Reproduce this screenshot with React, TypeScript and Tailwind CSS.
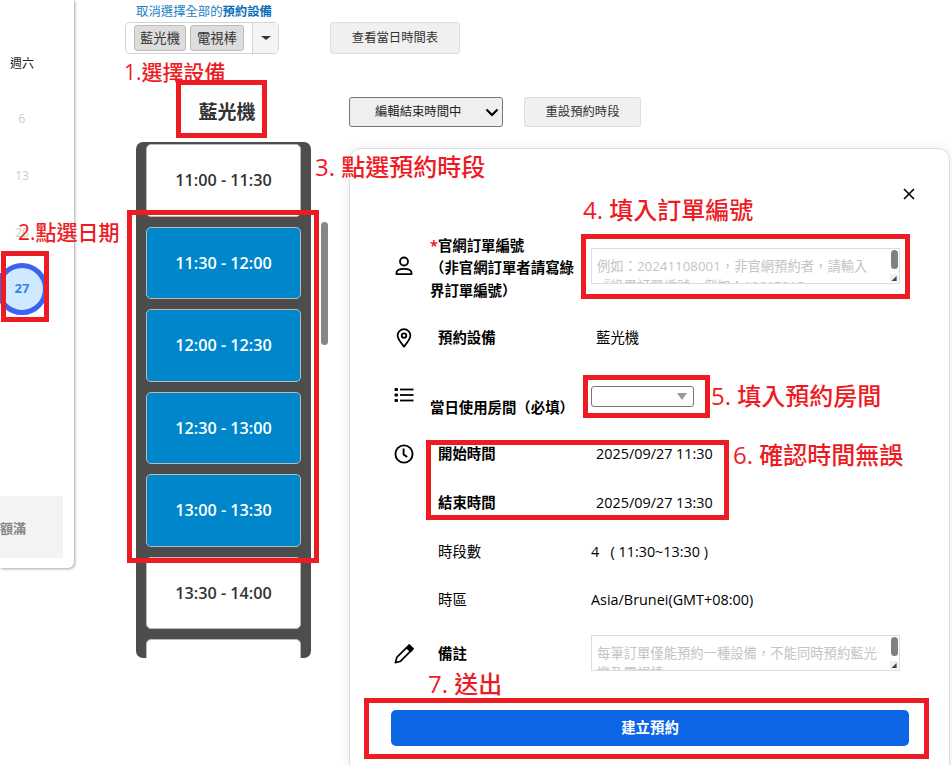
const FONT = "font-['Open_Sans','Noto_Sans_CJK_TC',sans-serif]"

const SLOTS = [
  { label: '11:00 - 11:30', picked: false },
  { label: '11:30 - 12:00', picked: true },
  { label: '12:00 - 12:30', picked: true },
  { label: '12:30 - 13:00', picked: true },
  { label: '13:00 - 13:30', picked: true },
  { label: '13:30 - 14:00', picked: false },
  { label: '14:00 - 14:30', picked: false },
]

function PersonIcon() {
  return (
    <svg width="18" height="20" viewBox="0 0 18 20" fill="none" stroke="black" strokeWidth="1.8">
      <circle cx="9" cy="5.5" r="4" />
      <path d="M1.5 18.2v-1.4c0-2.4 2.4-4 7.5-4s7.5 1.6 7.5 4v1.4z" strokeLinejoin="round" />
    </svg>
  )
}

function PinIcon() {
  return (
    <svg width="16" height="20" viewBox="0 0 16 20" fill="none" stroke="black" strokeWidth="1.8">
      <path d="M8 18.6C4.6 14.6 1.6 11 1.6 7.6a6.4 6.4 0 0 1 12.8 0c0 3.4-3 7-6.4 11z" strokeLinejoin="round" />
      <circle cx="8" cy="7.6" r="2.3" />
    </svg>
  )
}

function ListIcon() {
  return (
    <svg width="20" height="16" viewBox="0 0 20 16" fill="black">
      <rect x="0.5" y="1" width="3.5" height="3" rx="1" />
      <rect x="0.5" y="6.5" width="3.5" height="3" rx="1" />
      <rect x="0.5" y="12" width="3.5" height="3" rx="1" />
      <rect x="6" y="1.6" width="13.5" height="1.8" />
      <rect x="6" y="7.1" width="13.5" height="1.8" />
      <rect x="6" y="12.6" width="13.5" height="1.8" />
    </svg>
  )
}

function ClockIcon() {
  return (
    <svg width="20" height="20" viewBox="0 0 20 20" fill="none" stroke="black" strokeWidth="1.9">
      <circle cx="10" cy="10" r="8.6" />
      <path d="M9.6 4.4v6l3.6 2.6" />
    </svg>
  )
}

function PencilIcon() {
  return (
    <svg width="20" height="20" viewBox="0 0 20 20" fill="none" stroke="black" strokeWidth="1.7">
      <path d="M1.4 18.6l1.4-5.2L12.6 3.6l3.8 3.8-9.8 9.8z" strokeLinejoin="round" />
      <path d="M13.2 3l2-2 3.8 3.8-2 2.2z" fill="black" />
    </svg>
  )
}

function FakeTextarea({ text, className }: { text: string; className: string }) {
  return (
    <div className={`relative h-[36px] w-[309px] shrink-0 overflow-hidden border border-[#ddd] bg-white ${className}`}>
      <p className="w-[288px] pl-[5px] pt-[7px] text-[13.33px] leading-[20px] text-[#c4c4c4]">{text}</p>
      <span className="absolute right-[1px] top-[1px] h-[19px] w-[7px] rounded-full bg-[#808080]" />
      <span className="absolute bottom-[1px] right-[1px] flex h-[8px] w-[8px] items-center justify-center bg-[#efefef] text-[5px] leading-none text-[#444]">
        ◢
      </span>
    </div>
  )
}

const ANNOTATIONS = [
  { text: '1.選擇設備', className: 'left-[124px] top-[57px] text-[21px]' },
  { text: '2.點選日期', className: 'left-[18px] top-[217px] text-[21px]' },
  { text: '3. 點選預約時段', className: 'left-[315px] top-[152px] text-[24px]' },
  { text: '4. 填入訂單編號', className: 'left-[583px] top-[195px] text-[24px]' },
  { text: '5. 填入預約房間', className: 'left-[711px] top-[381px] text-[24px]' },
  { text: '6. 確認時間無誤', className: 'left-[733px] top-[440px] text-[24px]' },
  { text: '7. 送出', className: 'left-[428px] top-[669px] text-[24px]' },
]

const BOXES = [
  'left-[176px] top-[80px] h-[58px] w-[91px]',
  'left-[1px] top-[251px] h-[71px] w-[48px]',
  'left-[127px] top-[210px] h-[353px] w-[192px]',
  'left-[581px] top-[234px] h-[65px] w-[329px]',
  'left-[583px] top-[375px] h-[43px] w-[127px]',
  'left-[426px] top-[440px] h-[80px] w-[303px]',
  'left-[364px] top-[698px] h-[61px] w-[565px]',
]

function Modal() {
  return (
    <div className="absolute left-[349px] top-[148px] h-[640px] w-[601px] rounded-[12px] border border-[#ddd] bg-white pl-[41px] text-[14.4px] text-black shadow-[0_0_12px_rgba(0,0,0,0.08)]">
      <div className="flex h-[76px] items-start justify-end pr-[34px] pt-[39px]">
        <svg width="12" height="12" viewBox="0 0 12 12" stroke="black" strokeWidth="1.6">
          <path d="M1 1l10 10M11 1L1 11" />
        </svg>
      </div>

      <div className="flex h-[80px] items-center">
        <div className="flex w-[25px] justify-center pt-[2px]">
          <PersonIcon />
        </div>
        <div className="ml-[14px] w-[146px] pt-[7px] font-semibold leading-[22.5px]">
          <p><span className="text-[#e00]">*</span>官網訂單編號</p>
          <p>（非官網訂單者請寫綠界訂單編號）</p>
        </div>
        <FakeTextarea
          className="ml-[15px] mt-[2px]"
          text="例如：20241108001，非官網預約者，請輸入『綠界訂單編號』例如：10615015"
        />
      </div>

      <div className="flex h-[66px] items-center">
        <div className="flex w-[25px] justify-center">
          <PinIcon />
        </div>
        <span className="ml-[22px] w-[158px] font-semibold">預約設備</span>
        <span>藍光機</span>
      </div>

      <div className="flex h-[70px] items-start pt-[15px]">
        <div className="flex w-[26px] justify-center pt-[1px]">
          <ListIcon />
        </div>
        <span className="ml-[13px] mt-[11px] w-[161px] whitespace-nowrap font-semibold">當日使用房間（必填）</span>
        <div className="relative h-[21px] w-[103px] rounded-[3px] border border-[#767676] bg-white">
          <span className="absolute right-[6px] top-[6px] h-0 w-0 border-x-[5px] border-t-[7px] border-x-transparent border-t-[#999]" />
        </div>
      </div>

      <div className="flex h-[49px] items-start pt-[2px]">
        <div className="flex w-[26px] justify-center pt-[1px]">
          <ClockIcon />
        </div>
        <span className="ml-[21px] w-[158px] font-semibold">開始時間</span>
        <span>2025/09/27 11:30</span>
      </div>

      <div className="flex h-[49px] items-start pt-[2px]">
        <span className="ml-[47px] w-[158px] font-semibold">結束時間</span>
        <span>2025/09/27 13:30</span>
      </div>

      <div className="flex h-[48px] items-start pt-[2px]">
        <span className="ml-[47px] w-[153px]">時段數</span>
        <span className="whitespace-pre">4   ( 11:30~13:30 )</span>
      </div>

      <div className="flex h-[48px] items-start pt-[2px]">
        <span className="ml-[47px] w-[153px]">時區</span>
        <span>Asia/Brunei(GMT+08:00)</span>
      </div>

      <div className="flex h-[75px] items-start">
        <div className="flex w-[26px] justify-center pt-[9px]">
          <PencilIcon />
        </div>
        <span className="ml-[21px] mt-[8px] w-[153px] font-semibold">備註</span>
        <FakeTextarea text="每筆訂單僅能預約一種設備，不能同時預約藍光機及電視棒。" />
      </div>

      <button className="block h-[36px] w-[518px] rounded-[5px] bg-[#0d66e4] font-semibold text-white">
        建立預約
      </button>
    </div>
  )
}

export default function App() {
  return (
    <div className={`relative flex h-[765px] w-[952px] overflow-hidden bg-white ${FONT}`}>
      {/* calendar sliver */}
      <div className="flex h-[568px] w-[74px] shrink-0 flex-col rounded-br-[6px] bg-white pt-[53px] text-[12px] shadow-[1px_1px_3px_rgba(0,0,0,0.35)]">
        <div className="w-[44px] pt-[2px] text-center leading-[18px] text-[#222]">週六</div>
        <div className="mt-[37px] w-[44px] text-center leading-[18px] text-[#ccc]">6</div>
        <div className="mt-[39px] w-[44px] text-center leading-[18px] text-[#ccc]">13</div>
        <div className="mt-[39px] w-[44px] text-center leading-[18px] text-[#ccc]">20</div>
        <div className="ml-[-4px] mt-[21px] flex h-[52px] w-[52px] items-center justify-center rounded-full border-[5px] border-[#3b63f0] bg-[#cfe9ff] text-[13px] font-bold text-[#3b7cf0]">
          27
        </div>
        <div className="mt-[181px] flex h-[62px] w-[63px] items-center justify-end whitespace-nowrap bg-[#f3f3f3] pr-[37px] pt-[3px] text-[13px] font-semibold text-[#888]">
          額滿
        </div>
      </div>
      <span className="absolute left-0 top-[273px] h-[29px] w-[2px] bg-[#3b63f0]" />

      {/* booking column */}
      <div className="relative flex grow flex-col pl-[51px]">
        <div className="ml-[2px] flex h-[22px] w-[154px] items-center justify-center whitespace-nowrap pt-[2px] text-[12.35px] text-[#1a7fc4]">
          取消選擇全部的<span className="font-semibold text-[#0a6fb8]">預約設備</span>
        </div>

        <div className="flex items-start">
          <div className="flex h-[32px] w-[154px] items-center overflow-hidden rounded-[5px] border border-[#d4d4d4]">
            <div className="flex grow items-center gap-[4px] pl-[8px]">
              <span className="rounded-[3px] border border-[#bbb] bg-[#ddd] px-[5px] text-[13.33px] leading-[24px] text-[#333]">藍光機</span>
              <span className="rounded-[3px] border border-[#bbb] bg-[#ddd] px-[6px] text-[13.33px] leading-[24px] text-[#333]">電視棒</span>
            </div>
            <div className="flex h-full w-[26px] items-center justify-center border-l border-[#d4d4d4] bg-[#f4f4f4]">
              <span className="h-0 w-0 border-x-[5px] border-t-[4px] border-x-transparent border-t-[#333]" />
            </div>
          </div>
          <button className="ml-[51px] h-[32px] w-[130px] rounded-[3px] border border-[#ddd] bg-[#f0f0f0] text-[12.35px] text-[#333]">
            查看當日時間表
          </button>
        </div>

        <div className="mt-[43px] flex items-center">
          <div className="w-[204px] text-center text-[19px] font-bold text-[#333]">藍光機</div>
          <div className="ml-[20px] flex h-[30px] w-[154px] items-center rounded-[3px] border border-[#767676] bg-[#efefef] pl-[25px] text-[12.35px] text-[#222]">
            編輯結束時間中
            <svg className="ml-[24px]" width="14" height="9" viewBox="0 0 14 9" fill="none" stroke="black" strokeWidth="2.2">
              <path d="M1.5 1.5l5.5 5.5 5.5-5.5" />
            </svg>
          </div>
          <button className="ml-[21px] h-[30px] w-[117px] rounded-[3px] border border-[#ddd] bg-[#f0f0f0] text-[12.35px] text-[#333]">
            重設預約時段
          </button>
        </div>

        <div className="mt-[15px] flex items-start pl-[11px]">
          <div className="flex h-[516px] w-[175px] flex-col gap-[10px] overflow-hidden rounded-[7px] bg-[#4d4d4d] px-[10px] pt-[2px]">
            {SLOTS.map((slot) => (
              <div
                key={slot.label}
                className={`flex h-[72.5px] shrink-0 items-center justify-center rounded-[5px] border border-[#bbb] text-[16.2px] font-semibold ${
                  slot.picked ? 'bg-[#0087cb] text-white' : 'bg-white text-[#333]'
                }`}
              >
                {slot.label}
              </div>
            ))}
          </div>
          <div className="ml-[10px] mt-[80px] h-[123px] w-[7px] rounded-full bg-[#868686]" />
        </div>
      </div>

      <Modal />

      {/* tutorial markup drawn on top of the screenshot */}
      {BOXES.map((box) => (
        <div key={box} className={`absolute border-[5px] border-[#ed1c24] ${box}`} />
      ))}
      {ANNOTATIONS.map((note) => (
        <span
          key={note.text}
          className={`absolute whitespace-nowrap font-medium leading-[30px] text-[#ed1c24] ${note.className}`}
        >
          {note.text}
        </span>
      ))}
    </div>
  )
}
